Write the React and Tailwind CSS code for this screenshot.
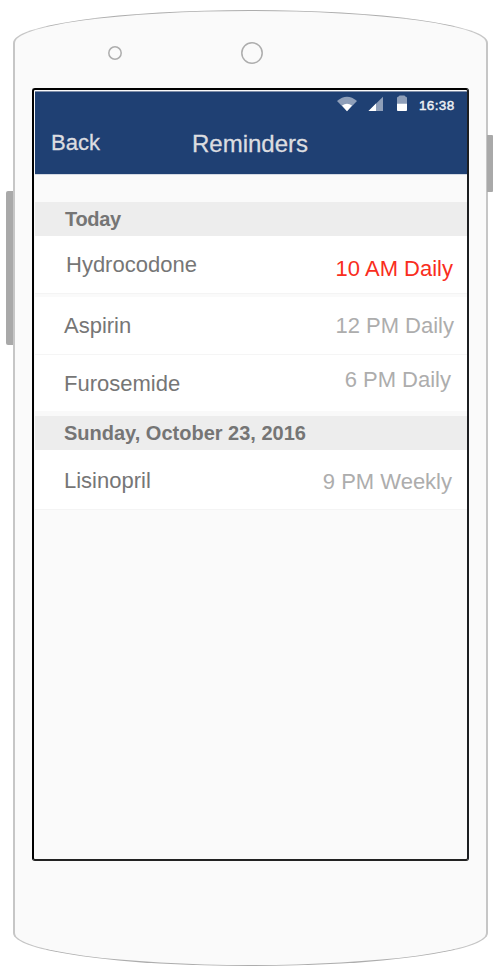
function StatusBar() {
  return (
    <div className="flex h-[27px] items-start pl-[302px]">
      <svg className="mt-[4px] h-[16px] w-[20px]" viewBox="0 0 20 16">
        <path d="M0 5Q10-3.6 20 5L10 15.2Z" fill="#8f9fb9" />
        <path d="M5 9.6Q10 5.8 15 9.6L10 15.2Z" fill="#fff" />
      </svg>
      <svg className="mt-[4px] ml-[11px] h-[16px] w-[16px]" viewBox="0 0 16 16">
        <path d="M0.5 15L15 0.8V15Z" fill="#8f9fb9" />
        <path d="M0.5 15L8 7.6V15Z" fill="#fff" />
      </svg>
      <svg className="mt-[3px] ml-[12px] h-[17px] w-[12px]" viewBox="0 0 12 17">
        <path d="M1 8.4V3Q1 1.8 2.4 1.8Q2.8 0.6 4.2 0.6H7.8Q9.2 0.6 9.6 1.8Q11 1.8 11 3V8.4Z" fill="#8f9fb9" />
        <path d="M1 8.4H11V15.2Q11 16 10.1 16H1.9Q1 16 1 15.2Z" fill="#fff" />
      </svg>
      <span className="mt-[6px] ml-[11px] text-[13.5px] leading-4 tracking-[0.35px] text-[#eef1f5] [-webkit-text-stroke:0.45px_#eef1f5]">16:38</span>
    </div>
  );
}

function Header() {
  return (
    <header className="h-[83px] border-t border-[#8190ab] bg-[#1f4073] text-[#dcdde0]">
      <StatusBar />
      <div className="flex items-start [-webkit-text-stroke:0.3px_#dcdde0]">
        <button className="mt-[12px] ml-[16px] w-[141px] text-left text-[22px] leading-6">Back</button>
        <h1 className="mt-[13px] text-[24px] leading-6">Reminders</h1>
      </div>
    </header>
  );
}

function Section({ children, className }) {
  return (
    <h2 className={`h-[34px] bg-[#ededed] pt-[5px] text-[20px] leading-6 font-bold text-[#757575] ${className}`}>
      {children}
    </h2>
  );
}

function Reminder({ name, time, className, nameClass, timeClass }) {
  return (
    <div className={`flex items-start justify-between bg-white text-[22px] leading-6 ${className}`}>
      <span className={`text-[#767676] ${nameClass}`}>{name}</span>
      <span className={timeClass}>{time}</span>
    </div>
  );
}

export default function App() {
  return (
    <div className="flex h-[971px] w-[497px] items-start overflow-hidden bg-white pt-[10px] pl-[6px] font-['Liberation_Sans',Arial,sans-serif]">
      <div className="mt-[181px] h-[154px] w-[8px] shrink-0 rounded-l-[2px] bg-[#a9a9a9]" />
      <div className="-ml-px h-[956px] w-[475px] shrink-0 rounded-[50%/33px] border border-x-2 border-[#adadad] border-x-[#c6c6c6] bg-[#fafafa] pl-[17px]">
        <div className="flex h-[77px] items-start">
          <svg className="mt-[35px] ml-[76px] size-[14px]" viewBox="0 0 14 14">
            <circle cx="7" cy="7" r="6.2" fill="none" stroke="#adadad" strokeWidth="1.5" />
          </svg>
          <svg className="mt-[31px] ml-[119px] size-[22px]" viewBox="0 0 22 22">
            <circle cx="11" cy="11" r="10.2" fill="none" stroke="#adadad" strokeWidth="1.5" />
          </svg>
        </div>
        <main className="h-[773px] w-[437px] rounded-[3px] border-2 border-black border-r-[#1c1e21] border-b-[#222] pl-px pt-px">
          <Header />
          <div className="w-[432px] border-t border-[#d3d9e3] pt-[27px]">
            <Section className="pl-[30px] tracking-[-0.3px]">Today</Section>
            <Reminder name="Hydrocodone" time="10 AM Daily" className="h-[57px]" nameClass="pt-[17px] pl-[31px]" timeClass="pt-[21px] pr-[14px] text-[#f92d20]" />
            <div className="h-[4px] border-t border-[#f4f4f4] bg-[#fafafa]" />
            <Reminder name="Aspirin" time="12 PM Daily" className="h-[58px] border-b border-[#f5f5f5]" nameClass="pt-[17px] pl-[29px]" timeClass="pt-[17px] pr-[13px] text-[#adadad]" />
            <Reminder name="Furosemide" time="6 PM Daily" className="h-[56px]" nameClass="pt-[17px] pl-[29px]" timeClass="pt-[13px] pr-[16px] text-[#adadad]" />
            <div className="h-[5px] bg-[#f9f9f9]" />
            <Section className="pl-[29px]">Sunday, October 23, 2016</Section>
            <Reminder name="Lisinopril" time="9 PM Weekly" className="h-[60px] border-b border-[#f4f4f4]" nameClass="pt-[19px] pl-[29px]" timeClass="pt-[20px] pr-[15px] text-[#adadad]" />
          </div>
        </main>
      </div>
      <div className="mt-[125px] -ml-px h-[57px] w-[6px] shrink-0 rounded-r-[1px] bg-[#a9a9a9]" />
    </div>
  );
}
